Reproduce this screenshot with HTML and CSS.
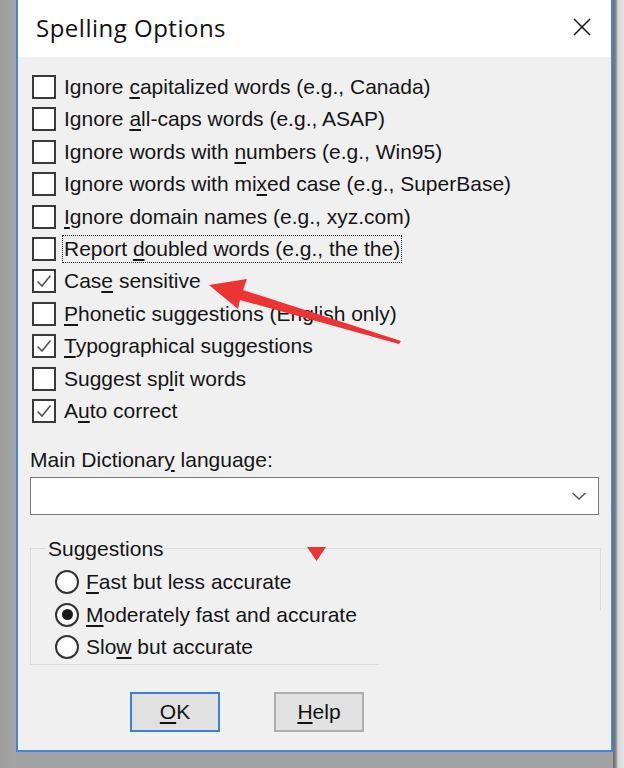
FILE: index.html
```html
<!DOCTYPE html>
<html>
<head>
<meta charset="utf-8">
<link rel="stylesheet" href="styles.css">
</head>
<body>
<div class="screen">
  <div class="strip-left"></div>
  <div class="dialog">
    <div class="titlebar">
      <span class="title">Spelling Options</span>
      <svg class="close" width="20" height="20" viewBox="0 0 20 20"><path d="M2 2L18 18M18 2L2 18" stroke="#111" stroke-width="1.5" fill="none"/></svg>
    </div>
    <div class="content">
      <div class="checks">
        <div class="row"><span class="box"></span><span class="lbl">Ignore <u>c</u>apitalized words (e.g., Canada)</span></div>
        <div class="row"><span class="box"></span><span class="lbl">Ignore <u>a</u>ll-caps words (e.g., ASAP)</span></div>
        <div class="row"><span class="box"></span><span class="lbl">Ignore words with <u>n</u>umbers (e.g., Win95)</span></div>
        <div class="row"><span class="box"></span><span class="lbl">Ignore words with mi<u>x</u>ed case (e.g., SuperBase)</span></div>
        <div class="row"><span class="box"></span><span class="lbl"><u>I</u>gnore domain names (e.g., xyz.com)</span></div>
        <div class="row"><span class="box"></span><span class="lbl focus">Report <u>d</u>oubled words (e.g., the the)</span></div>
        <div class="row"><span class="box checked"><svg viewBox="0 0 20 20"><path d="M3.5 10.5L8 15L16.5 4.5" stroke="#555" stroke-width="1.6" fill="none"/></svg></span><span class="lbl">Cas<u>e</u> sensitive</span></div>
        <div class="row"><span class="box"></span><span class="lbl"><u>P</u>honetic suggestions (English only)</span></div>
        <div class="row"><span class="box checked"><svg viewBox="0 0 20 20"><path d="M3.5 10.5L8 15L16.5 4.5" stroke="#555" stroke-width="1.6" fill="none"/></svg></span><span class="lbl"><u>T</u>ypographical suggestions</span></div>
        <div class="row"><span class="box"></span><span class="lbl">Suggest sp<u>l</u>it words</span></div>
        <div class="row"><span class="box checked"><svg viewBox="0 0 20 20"><path d="M3.5 10.5L8 15L16.5 4.5" stroke="#555" stroke-width="1.6" fill="none"/></svg></span><span class="lbl">A<u>u</u>to correct</span></div>
      </div>
      <div class="field-label">Main Dictionar<u>y</u> language:</div>
      <div class="combo">
        <svg class="chev" width="16" height="10" viewBox="0 0 16 10"><path d="M1.5 2L8 8L14.5 2" stroke="#555" stroke-width="1.4" fill="none"/></svg>
      </div>
      <div class="group">
        <div class="legend">Suggestions</div>
        <div class="radios">
          <div class="row"><span class="radio"></span><span class="lbl"><u>F</u>ast but less accurate</span></div>
          <div class="row"><span class="radio on"></span><span class="lbl"><u>M</u>oderately fast and accurate</span></div>
          <div class="row"><span class="radio"></span><span class="lbl">Slo<u>w</u> but accurate</span></div>
        </div>
      </div>
      <div class="buttons">
        <button class="btn default"><u>O</u>K</button>
        <button class="btn"><u>H</u>elp</button>
      </div>
    </div>
  </div>
  <div class="strip-right"></div>
</div>
<svg class="annot" width="624" height="768" viewBox="0 0 624 768">
  <polygon points="209,285 247,279 243,290 401,341 399,344 240,300 238,309" fill="#ec3434"/>
  <polygon points="307,547 326,547 316.5,561" fill="#ec3434"/>
</svg>
</body>
</html>
```
FILE: styles.css
```css
html, body {
  margin: 0;
  padding: 0;
}
body {
  width: 624px;
  height: 768px;
  overflow: hidden;
  background: #a2a2a2;
  font-family: "Liberation Sans", Arial, sans-serif;
  color: #151515;
  position: relative;
}
.screen {
  display: flex;
  height: 768px;
}
.strip-left {
  width: 16px;
  flex: none;
  background: linear-gradient(to right, #9c9c9c, #a6a6a6);
}
.strip-right {
  flex: 1;
  background: linear-gradient(to right, #6a6a6a 0, #8a8a8a 3px, #d8d8d8 5px, #e6e6e6 100%);
}
.dialog {
  width: 597px;
  height: 752px;
  box-sizing: border-box;
  flex: none;
  border: 2px solid #3f87da;
  border-top: none;
  background: #f0f0f0;
  display: flex;
  flex-direction: column;
}
.titlebar {
  height: 57px;
  background: #fff;
  display: flex;
  align-items: center;
  justify-content: space-between;
  padding: 0 19px 0 18px;
  flex: none;
}
.title {
  font-family: "Open Sans", "Noto Sans", sans-serif;
  font-size: 24px;
  letter-spacing: 0.5px;
  color: #111;
  margin-top: -3px;
}
.close {
  display: block;
  margin-top: -4px;
}
.content {
  padding: 13.8px 0 0 12px;
  display: flex;
  flex-direction: column;
}
.checks {
  margin-left: 2px;
  display: flex;
  flex-direction: column;
}
.row {
  height: 32.4px;
  display: flex;
  align-items: center;
  font-size: 21px;
}
.box {
  width: 20px;
  height: 20px;
  border: 2px solid #3a3a3a;
  background: #fff;
  flex: none;
  margin-right: 8px;
  display: block;
}
.box svg {
  width: 20px;
  height: 20px;
  display: block;
}
.lbl {
  white-space: nowrap;
  line-height: 24px;
}
.lbl u {
  text-underline-offset: 3px;
}
.focus {
  outline: 1px dotted #222;
  outline-offset: 1px;
}
.field-label {
  font-size: 21px;
  line-height: 32px;
  margin-top: 16.8px;
  white-space: nowrap;
}
.field-label u {
  text-underline-offset: 3px;
}
.combo {
  margin-top: 1px;
  width: 569px;
  height: 38px;
  box-sizing: border-box;
  border: 1px solid #7a7a7a;
  background: #fff;
  display: flex;
  align-items: center;
  justify-content: flex-end;
  padding-right: 11px;
}
.chev {
  display: block;
}
.group {
  margin-top: 33px;
  width: 571px;
  box-sizing: border-box;
  border-top: 1px solid #dadada;
  border-left: 1px solid #dadada;
  position: relative;
  height: 117px;
}
.group::after {
  content: "";
  position: absolute;
  right: 0;
  top: 0;
  width: 1px;
  height: 61px;
  background: #dadada;
}
.group::before {
  content: "";
  position: absolute;
  left: -1px;
  bottom: 0;
  width: 349px;
  height: 1px;
  background: #dadada;
}
.legend {
  font-size: 21px;
  line-height: 24px;
  margin: -12px 0 0 15px;
  padding: 0 2px;
  background: #f0f0f0;
  width: max-content;
}
.radios {
  margin: 5px 0 0 24px;
  display: flex;
  flex-direction: column;
}
.radios .row {
  height: 32.5px;
}
.radio {
  width: 20px;
  height: 20px;
  border: 2px solid #333;
  border-radius: 50%;
  background: #fff;
  flex: none;
  margin-right: 7px;
  display: flex;
  align-items: center;
  justify-content: center;
}
.radio.on::after {
  content: "";
  width: 11px;
  height: 11px;
  border-radius: 50%;
  background: #1a1a1a;
}
.buttons {
  margin-top: 27px;
  display: flex;
  gap: 54px;
  padding-left: 100px;
}
.btn {
  width: 90px;
  height: 40px;
  box-sizing: border-box;
  font-family: "Liberation Sans", Arial, sans-serif;
  font-size: 21px;
  color: #111;
  background: #e1e1e1;
  border: 2px solid #adadad;
  padding: 0;
}
.btn u {
  text-underline-offset: 3px;
}
.btn.default {
  border-color: #3a80da;
}
.annot {
  position: absolute;
  left: 0;
  top: 0;
  pointer-events: none;
}
```
